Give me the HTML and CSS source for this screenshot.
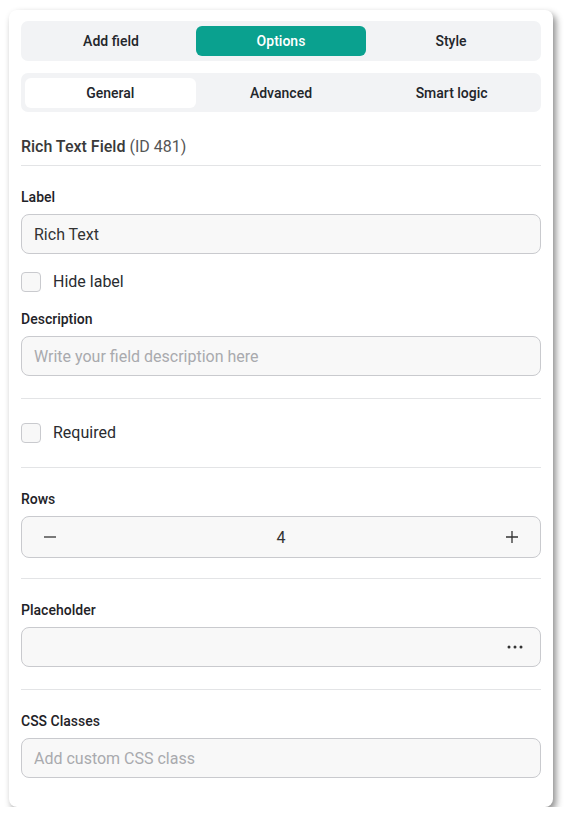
FILE: index.html
```html
<!doctype html>
<html lang="en">
<head>
    <meta charset="UTF-8" />
    <meta name="viewport" content="width=device-width, initial-scale=1.0" />
    <title>Field Options</title>
    <link rel="stylesheet" href="styles.css">
</head>
<body>
    <div class="panel">
        <div class="tabs">
            <button class="tab">Add field</button>
            <button class="tab tab-active">Options</button>
            <button class="tab">Style</button>
        </div>
        <div class="tabs subtabs">
            <button class="tab sub-active">General</button>
            <button class="tab">Advanced</button>
            <button class="tab">Smart logic</button>
        </div>

        <div class="field-title"><strong>Rich Text Field</strong> (ID 481)</div>

        <div class="section">
            <label class="label">Label</label>
            <input class="input" type="text" value="Rich Text">
            <label class="check"><span class="box"></span>Hide label</label>
            <label class="label">Description</label>
            <input class="input" type="text" placeholder="Write your field description here">
        </div>

        <div class="section section-check">
            <label class="check"><span class="box"></span>Required</label>
        </div>

        <div class="section section-rows">
            <label class="label">Rows</label>
            <div class="stepper">
                <span class="step-btn">
                    <svg width="14" height="14" viewBox="0 0 14 14"><path d="M1 7h12" stroke="#333" stroke-width="1.3"/></svg>
                </span>
                <span class="step-value">4</span>
                <span class="step-btn">
                    <svg width="14" height="14" viewBox="0 0 14 14"><path d="M1 7h12M7 1v12" stroke="#333" stroke-width="1.3"/></svg>
                </span>
            </div>
        </div>

        <div class="section">
            <label class="label">Placeholder</label>
            <div class="input input-more">
                <svg width="16" height="4" viewBox="0 0 16 4"><circle cx="2" cy="2" r="1.5" fill="#333"/><circle cx="8" cy="2" r="1.5" fill="#333"/><circle cx="14" cy="2" r="1.5" fill="#333"/></svg>
            </div>
        </div>

        <div class="section section-last">
            <label class="label">CSS Classes</label>
            <input class="input" type="text" placeholder="Add custom CSS class">
        </div>
    </div>
</body>
</html>
```

FILE: styles.css
```css
body {
    font-family: Roboto, 'Liberation Sans', sans-serif;
    background-color: #ffffff;
    margin: 0;
    padding: 10px 0 0 9px;
    color: #1f2328;
}

.panel {
    width: 544px;
    box-sizing: border-box;
    background-color: #ffffff;
    border-radius: 8px;
    padding: 11px 12px 29px;
    box-shadow: 3px 4px 7px rgba(0, 0, 0, 0.45);
}

.tabs {
    display: grid;
    grid-template-columns: repeat(3, 1fr);
    background-color: #f2f3f5;
    border-radius: 7px;
    padding: 5px;
    height: 30px;
}

.subtabs {
    margin-top: 12px;
    padding: 5px 4px 4px;
}

.tab {
    border: none;
    background: none;
    font-family: 'Roboto Medium', Roboto, sans-serif;
    font-size: 14px;
    font-weight: 500;
    color: #23262b;
    border-radius: 6px;
    cursor: pointer;
    padding: 0;
}

.tab-active {
    background-color: #0aa18f;
    color: #ffffff;
}

.sub-active {
    background-color: #ffffff;
}

.field-title {
    margin-top: 25px;
    font-size: 16px;
    line-height: 20px;
    color: #555;
    padding-bottom: 8px;
    border-bottom: 1px solid #e3e4e6;
}

.field-title strong {
    font-family: 'Roboto Medium', Roboto, sans-serif;
    font-weight: 500;
    color: #3a3a3a;
}

.section {
    padding: 21px 0 22px;
    border-bottom: 1px solid #e3e4e6;
}

.section-check {
    padding: 24px 0 24px;
}

.section-rows {
    padding-bottom: 20px;
}

.section-last {
    border-bottom: none;
    padding-bottom: 0;
}

.label {
    display: block;
    font-family: 'Roboto Medium', Roboto, sans-serif;
    font-size: 14px;
    font-weight: 500;
    line-height: 20px;
    color: #1f2328;
    margin-bottom: 7px;
}

.input {
    display: block;
    width: 100%;
    height: 40px;
    box-sizing: border-box;
    border: 1px solid #c9cace;
    border-radius: 8px;
    background-color: #f8f8f8;
    padding: 0 12px;
    font-family: inherit;
    font-size: 16px;
    color: #333;
}

.input::placeholder {
    color: #a9aaae;
}

.input-more {
    display: flex;
    align-items: center;
    justify-content: flex-end;
    padding-right: 17px;
}

.check {
    display: flex;
    align-items: center;
    gap: 12px;
    font-size: 16px;
    line-height: 20px;
    color: #2a2c30;
    margin: 18px 0 17px;
}

.section-check .check {
    margin: 0;
}

.box {
    width: 18px;
    height: 18px;
    border: 1px solid #c9cace;
    border-radius: 4px;
    background-color: #f8f8f8;
}

.stepper {
    display: flex;
    align-items: center;
    justify-content: space-between;
    height: 42px;
    box-sizing: border-box;
    border: 1px solid #c9cace;
    border-radius: 8px;
    background-color: #f8f8f8;
    padding: 0 21px;
}

.step-btn {
    display: flex;
}

.step-value {
    font-size: 16px;
    color: #333;
}
```
